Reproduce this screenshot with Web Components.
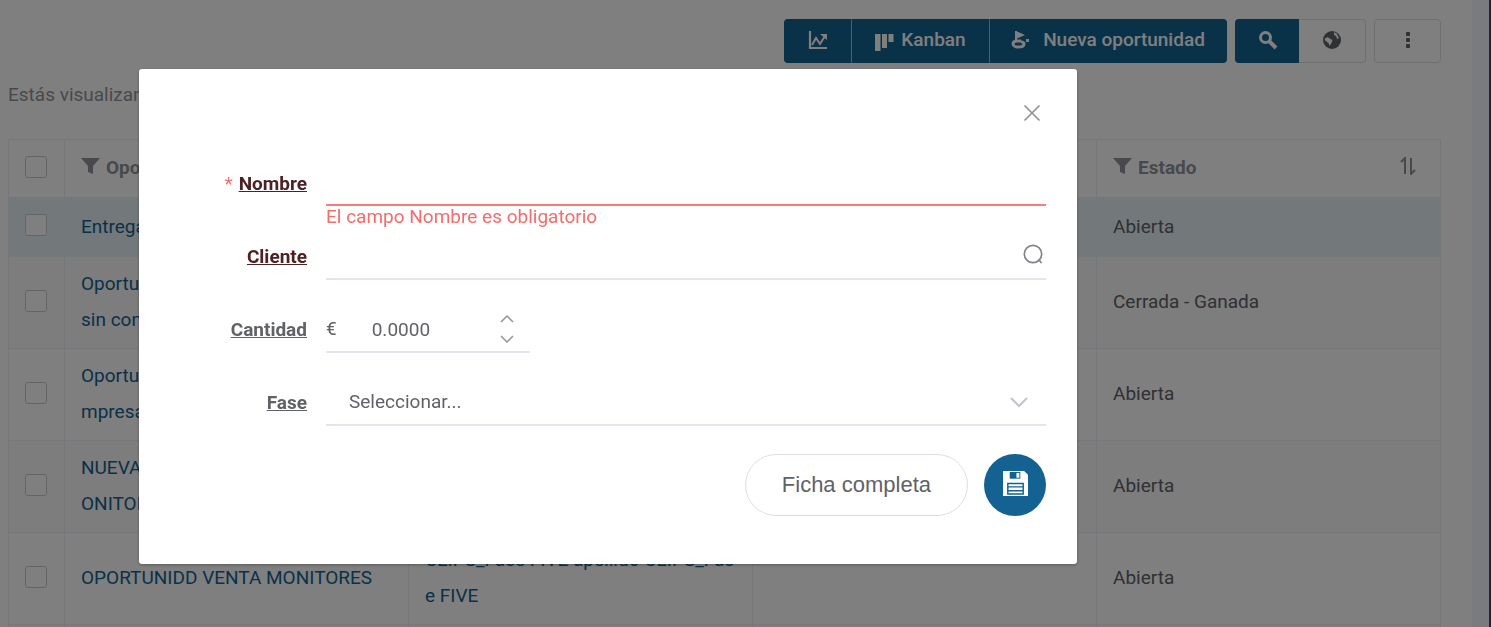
<!DOCTYPE html>
<html lang="es">
<head>
<meta charset="utf-8">
<title>Oportunidades</title>
<style>
  html, body { margin: 0; height: 100%; }
  body { font: 19px/36px Roboto, "Liberation Sans", sans-serif; color: #606266; background: #fff; overflow: hidden; }
</style>
</head>
<body>
<crm-page>
  <crm-toolbar slot="toolbar"></crm-toolbar>
  <crm-grid></crm-grid>
  <crm-dialog slot="dialog"><quick-form></quick-form></crm-dialog>
</crm-page>

<template id="t-page">
  <style>
    :host { display: flex; height: 100vh; overflow: hidden; }
    main { flex: 1; min-width: 0; padding: 19px 31px 0 8px; background: #fff; }
    p { margin: 14px 0 26px; color: #909399; }
    .rail { width: 17px; background: #f5f7fc; border-right: 2px solid #005a94; }
  </style>
  <main>
    <slot name="toolbar"></slot>
    <p>Estás visualizando</p>
    <slot></slot>
  </main>
  <div class="rail"></div>
  <slot name="dialog"></slot>
</template>

<template id="t-toolbar">
  <style>
    :host { display: flex; justify-content: flex-end; gap: 8px; }
    .group { display: flex; }
    button { box-sizing: border-box; height: 44px; margin: 0; padding: 0 0 2px; border: 1px solid #dcdfe6; border-radius: 4px; background: #fff; color: #606266; font: 500 19px/20px Roboto, "Liberation Sans", sans-serif; display: flex; align-items: center; justify-content: center; }
    button.primary { background: #136291; border-color: #136291; color: #fff; }
    .group button + button { border-left-color: #a1c0d3; }
    .group button:not(:last-child) { border-top-right-radius: 0; border-bottom-right-radius: 0; border-right: 0; }
    .group button:not(:first-child) { border-top-left-radius: 0; border-bottom-left-radius: 0; }
    .search button + button { border-left: 0; }
    svg { display: block; }
    .chart { width: 67px; } .kanban { width: 138px; gap: 6px; } .new { width: 238px; gap: 10px; }
    .find { width: 64px; } .world, .more { width: 67px; }
  </style>
  <div class="group">
    <button class="primary chart" aria-label="Gráfico"><svg width="20" height="20" viewBox="0 0 20 20" fill="none" stroke="currentColor" stroke-width="2"><path d="M2 1v17h17" stroke-width="2.200"/><path d="M4 15l4-7 4 6 5-8"/><path d="M12 4h7v6z" fill="currentColor" stroke="none"/></svg></button>
    <button class="primary kanban"><svg width="20" height="22" viewBox="0 0 20 22" fill="currentColor"><path d="M0 5h5.500v18H0zM7 5h5v14H7zM13.500 5h5v8h-5z"/></svg>Kanban</button>
    <button class="primary new"><svg width="22" height="20" viewBox="0 0 22 20" fill="none" stroke="currentColor" stroke-width="2"><path d="M5 1v10"/><path d="M5 1l9 4-9 4z" fill="currentColor" stroke="none"/><path d="M10 11H6c-3 0-4 1.500-4 3s2 3 5 3 6-1 6-3-1-2-3-2" stroke-width="3"/><path d="M15 9h3v3h-3z" fill="currentColor" stroke="none"/></svg>Nueva oportunidad</button>
  </div>
  <div class="group search">
    <button class="primary find" aria-label="Buscar"><svg width="20" height="20" viewBox="0 0 20 20" fill="none" stroke="currentColor"><circle cx="7.500" cy="7.500" r="5" stroke-width="3"/><path d="M11 11l7 7" stroke-width="4"/></svg></button>
    <button class="world" aria-label="Mundo"><svg width="20" height="20" viewBox="0 0 20 20"><circle cx="10" cy="10" r="9" fill="#606266"/><path d="M2.500 9l3-2 3 2 2 1-1 3-2 3-1-3-3-2zM12 2l3 2 2 4-2 1-1-3-2-1z" fill="#fff"/></svg></button>
  </div>
  <button class="more" aria-label="Más"><svg width="6" height="18" viewBox="0 0 6 18" fill="currentColor"><rect x="1" y="1" width="4" height="4" rx="1"/><rect x="1" y="7" width="4" height="4" rx="1"/><rect x="1" y="13" width="4" height="4" rx="1"/></svg></button>
</template>

<template id="t-grid">
  <style>
    :host { display: block; }
    table { width: 100%; table-layout: fixed; border-collapse: separate; border-spacing: 0; border-top: 1px solid #ebeef5; border-left: 1px solid #ebeef5; }
    th, td { box-sizing: border-box; height: 92px; padding: 9px 16px 10px; border-right: 1px solid #ebeef5; border-bottom: 1px solid #ebeef5; text-align: left; vertical-align: middle; overflow: hidden; white-space: nowrap; }
    th:first-child, td:first-child { padding: 8px 16px 12px; }
    th { height: 58px; color: #909399; font-weight: 700; }
    tr.current td { height: 59px; background: #e7f1f7; border-color: #e7f1f7; }
    tr.odd td { background: #fafafa; }
    col.pick { width: 56px; }
    input { appearance: none; box-sizing: border-box; display: block; width: 22px; height: 22px; margin: 0; border: 1px solid #c8cad0; border-radius: 3px; background: #fff; }
    a { color: #136291; text-decoration: none; }
    .head { display: flex; align-items: center; gap: 6px; }
    .head svg { margin-bottom: 4px; }
    .head .sort { margin-left: auto; margin-right: 8px; }
  </style>
  <table>
    <colgroup><col class="pick"><col><col><col><col></colgroup>
    <thead><tr>
      <th><input type="checkbox" aria-label="Seleccionar todo"></th>
      <th><div class="head"><svg width="19" height="16" viewBox="0 0 19 16" fill="#909399"><path d="M0 0h19l-7 8v8l-5-2V8z"/></svg>Oportunidad</div></th>
      <th></th><th></th>
      <th><div class="head"><svg width="19" height="16" viewBox="0 0 19 16" fill="#909399"><path d="M0 0h19l-7 8v8l-5-2V8z"/></svg>Estado<svg class="sort" width="16" height="18" viewBox="0 0 16 18" fill="none" stroke="#909399" stroke-width="2"><path d="M1 5l4-4v16M15 13l-4 4V1"/></svg></div></th>
    </tr></thead>
    <tbody>
      <tr class="current"><td><input type="checkbox" aria-label="Seleccionar"></td><td><a href="#">Entrega</a></td><td></td><td></td><td>Abierta</td></tr>
      <tr class="odd"><td><input type="checkbox" aria-label="Seleccionar"></td><td><a href="#">Oportu<br>sin con</a></td><td></td><td></td><td>Cerrada - Ganada</td></tr>
      <tr><td><input type="checkbox" aria-label="Seleccionar"></td><td><a href="#">Oportu<br>mpresa</a></td><td></td><td></td><td>Abierta</td></tr>
      <tr class="odd"><td><input type="checkbox" aria-label="Seleccionar"></td><td><a href="#">NUEVA<br>ONITOR</a></td><td></td><td></td><td>Abierta</td></tr>
      <tr><td><input type="checkbox" aria-label="Seleccionar"></td><td><a href="#">OPORTUNIDD VENTA MONITORES</a></td><td><a href="#">CLIPS_Fase FIVE apellido CLIPS_Fas<br>e FIVE</a></td><td></td><td>Abierta</td></tr>
      <tr class="odd"><td></td><td></td><td></td><td></td><td></td></tr>
    </tbody>
  </table>
</template>

<template id="t-dialog">
  <style>
    :host { position: fixed; inset: 0; box-sizing: border-box; padding: 69px 414px 0 139px; background: rgba(0,0,0,.5); }
    section { box-sizing: border-box; padding: 32px 31px 48px 32px; background: #fff; border-radius: 3px; box-shadow: 0 1px 3px rgba(0,0,0,.3); }
    header { display: flex; justify-content: flex-end; padding-right: 2px; }
    button { margin: 0; padding: 2px; border: 0; background: none; color: #909399; }
    svg { display: block; }
  </style>
  <section role="dialog" aria-modal="true">
    <header><button aria-label="Cerrar"><svg width="20" height="20" viewBox="0 0 20 20" fill="none" stroke="currentColor" stroke-width="1.700"><path d="M2.500 2.500l15 15M17.500 2.500l-15 15"/></svg></button></header>
    <slot></slot>
  </section>
</template>

<template id="t-row">
  <style>
    :host { display: grid; grid-template-columns: 136px 1fr; column-gap: 19px; align-items: start; }
    .label { height: 48px; text-align: right; line-height: 52px; }
  </style>
  <div class="label"><slot name="label"></slot></div>
  <div><slot></slot></div>
</template>

<template id="t-form">
  <style>
    :host { display: block; }
    form { display: block; padding-top: 33px; }
    form-row { margin-bottom: 24px; }
    form-row.name { margin-bottom: 3px; }
    label { font-weight: 700; text-decoration: underline; }
    label.dark { color: #4d2023; }
    .req { margin-right: 6px; color: #f56c6c; }
    .box { box-sizing: border-box; display: flex; align-items: center; height: 49px; padding-top: 3px; border-bottom: 2px solid #e3e5ec; }
    .name .box { height: 48px; border-color: #fa7c7c; }
    .error { color: #f56c6c; line-height: 22px; }
    input, select { flex: 1; min-width: 0; height: 44px; margin: 0; padding: 0; border: 0; outline: 0; background: none; color: #606266; font: 19px/24px Roboto, "Liberation Sans", sans-serif; }
    select { appearance: none; padding-left: 23px; }
    .amount { width: 204px; }
    .amount input { padding-left: 35px; }
    .steps { display: flex; flex-direction: column; gap: 2px; margin-right: 16px; }
    .steps button { padding: 4px 0; border: 0; background: none; }
    svg { display: block; }
    .lens { margin: 0 2px 4px 0; } .down { margin-right: 18px; }
    footer { display: flex; justify-content: flex-end; gap: 16px; padding-top: 4px; }
    .full, .save { box-sizing: border-box; height: 62px; margin: 0; border-radius: 32px; }
    .full { padding: 0 36px; border: 1px solid #dcdfe6; background: #fff; color: #606266; font: 22px/24px "Liberation Sans", sans-serif; }
    .save { width: 62px; padding: 0 0 4px; border: 0; background: #136291; display: flex; align-items: center; justify-content: center; }
  </style>
  <form>
    <form-row class="name">
      <span slot="label"><span class="req">*</span><label class="dark" for="nombre">Nombre</label></span>
      <div class="box"><input id="nombre" type="text"></div>
      <div class="error">El campo Nombre es obligatorio</div>
    </form-row>
    <form-row>
      <label slot="label" class="dark" for="cliente">Cliente</label>
      <div class="box"><input id="cliente" type="text"><svg class="lens" width="22" height="22" viewBox="0 0 22 22" fill="none" stroke="#808389" stroke-width="1.700"><circle cx="11" cy="11" r="8.700"/><path d="M15.500 17.500h2l2 2.500"/></svg></div>
    </form-row>
    <form-row>
      <label slot="label" for="cantidad">Cantidad</label>
      <div class="box amount"><span>€</span><input id="cantidad" type="text" value="0.0000">
        <div class="steps">
          <button type="button" aria-label="Aumentar"><svg width="14" height="10" viewBox="0 0 14 10" fill="none" stroke="#909399" stroke-width="1.500"><path d="M1 8l6-6 6 6"/></svg></button>
          <button type="button" aria-label="Reducir"><svg width="14" height="10" viewBox="0 0 14 10" fill="none" stroke="#909399" stroke-width="1.500"><path d="M1 2l6 6 6-6"/></svg></button>
        </div></div>
    </form-row>
    <form-row>
      <label slot="label" for="fase">Fase</label>
      <div class="box"><select id="fase"><option>Seleccionar...</option></select><svg class="down" width="18" height="12" viewBox="0 0 18 12" fill="none" stroke="#c0c4cc" stroke-width="2"><path d="M1 2l8 8 8-8"/></svg></div>
    </form-row>
    <footer>
      <button class="full" type="button">Ficha completa</button>
      <button class="save" type="button" aria-label="Guardar"><svg width="25" height="25" viewBox="0 0 26 26"><path d="M0 0h22l4 4v22H0z" fill="#fff"/><path d="M7 1h11v7H7z" fill="#136291"/><path d="M14 2h3v5h-3z" fill="#fff"/><path d="M5 13h16v11H5z" fill="#fff" stroke="#136291" stroke-width="1.500"/><path d="M5 16.500h16M5 20.500h16" stroke="#136291" stroke-width="1.500"/></svg></button>
    </footer>
  </form>
</template>

<script>
  const define = (name, templateId) => customElements.define(name, class extends HTMLElement {
    constructor() {
      super();
      this.attachShadow({ mode: "open" }).append(document.getElementById(templateId).content.cloneNode(true));
    }
  });
  define("form-row", "t-row");
  define("crm-toolbar", "t-toolbar");
  define("crm-grid", "t-grid");
  define("quick-form", "t-form");
  define("crm-dialog", "t-dialog");
  define("crm-page", "t-page");
</script>
</body>
</html>
